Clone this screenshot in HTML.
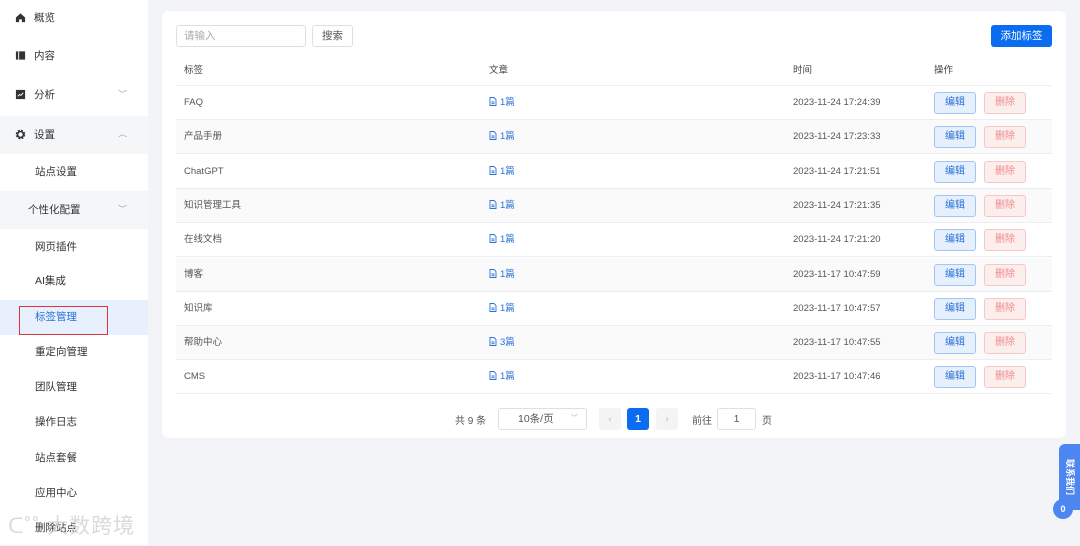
<!DOCTYPE html>
<html><head><meta charset="utf-8"><style>
*{box-sizing:border-box;margin:0;padding:0}
body{width:1080px;height:545px;overflow:hidden;background:#f3f4f7;font-family:"Liberation Sans","Noto Sans CJK SC",sans-serif;font-size:10px;color:#333;position:relative}
.sb{position:absolute;left:0;top:0;width:148px;height:545px;background:#fff}
.mi{position:absolute;left:0;width:148px;height:36px;line-height:36px;font-size:10.5px;color:#333}
.mi .ic{position:absolute;left:15px;top:12px;width:11px;height:11px}
.chev{position:absolute;right:22px;top:0;font-size:7px;color:#888;transform:scaleX(1.3)}
.card{position:absolute;left:162px;top:11px;width:904px;height:427px;background:#fff;border-radius:7px}
.inp{position:absolute;border:1px solid #dcdfe6;border-radius:3px;background:#fff;color:#aaa;font-size:10.5px}
.btn{position:absolute;border-radius:3px;text-align:center;font-size:10.5px}
.row{position:absolute;left:176px;width:876px;height:34px;border-bottom:1px solid #ebeef5;line-height:34px}
.row span{position:absolute;font-size:9.5px;color:#555}
.e,.d{position:absolute;top:6px;width:42px;height:22px;border-radius:3px;display:flex;align-items:center;justify-content:center;font-size:10px}
.e{left:758px;border:1px solid #a3c5f5;background:#e6f0fd;color:#2a72d8}
.d{left:808px;border:1px solid #f7c7c7;background:#fdeeee;color:#f08a8a}
.art{color:#2a72d8!important}
</style></head><body>
<div class="sb">
<div class="mi" style="top:0"><svg class="ic" viewBox="0 0 12 12"><path d="M1 6L6 1.5 11 6V11H7.5V8H4.5V11H1Z" fill="#333"/></svg><span style="position:absolute;left:34px">概览</span></div>
<div class="mi" style="top:38px"><svg class="ic" viewBox="0 0 12 12"><rect x="1" y="1.5" width="2.5" height="9" fill="#333"/><rect x="4.5" y="1.5" width="6.5" height="9" fill="#333"/></svg><span style="position:absolute;left:34px">内容</span></div>
<div class="mi" style="top:77px"><svg class="ic" viewBox="0 0 12 12"><rect x="1" y="1" width="10" height="10" fill="#333"/><path d="M3 8L5 6 6.5 7 9 4" stroke="#fff" fill="none"/></svg><span style="position:absolute;left:34px">分析</span><span class="chev">﹀</span></div>
<div class="mi" style="top:116px;height:38px;line-height:38px;background:#f5f6f8"><svg class="ic" viewBox="0 0 12 12" style="top:13px"><circle cx="6" cy="6" r="4" fill="none" stroke="#333" stroke-width="2.4" stroke-dasharray="2 1.2"/><circle cx="6" cy="6" r="3.2" fill="none" stroke="#333" stroke-width="1.6"/></svg><span style="position:absolute;left:34px">设置</span><span class="chev">︿</span></div>
<div class="mi" style="top:154px"><span style="position:absolute;left:35px">站点设置</span></div>
<div class="mi" style="top:191px;height:38px;line-height:38px;background:#f5f6f8"><span style="position:absolute;left:28px">个性化配置</span><span class="chev">﹀</span></div>
<div class="mi" style="top:229px"><span style="position:absolute;left:35px">网页插件</span></div>
<div class="mi" style="top:263px"><span style="position:absolute;left:35px">AI集成</span></div>
<div class="mi" style="top:300px;background:#e8f0fd;height:35px;line-height:35px"><span style="position:absolute;left:35px;color:#2a72d8">标签管理</span><div style="position:absolute;left:19px;top:6px;width:89px;height:29px;border:1.5px solid #d9363e"></div></div>
<div class="mi" style="top:334px"><span style="position:absolute;left:35px">重定向管理</span></div>
<div class="mi" style="top:369px"><span style="position:absolute;left:35px">团队管理</span></div>
<div class="mi" style="top:404px"><span style="position:absolute;left:35px">操作日志</span></div>
<div class="mi" style="top:440px"><span style="position:absolute;left:35px">站点套餐</span></div>
<div class="mi" style="top:475px"><span style="position:absolute;left:35px">应用中心</span></div>
<div class="mi" style="top:510px"><span style="position:absolute;left:35px">删除站点</span></div>
<div style="position:absolute;left:8px;top:510px;font-size:21px;color:rgba(205,205,205,.75);letter-spacing:1px">ᑕ˚˚ 大数跨境</div>
</div>
<div class="card"></div>
<div class="inp" style="left:176px;top:25px;width:130px;height:22px;line-height:20px;padding-left:7px">请输入</div>
<div class="btn" style="left:312px;top:25px;width:41px;height:22px;line-height:20px;border:1px solid #dcdfe6;color:#555">搜索</div>
<div class="btn" style="left:991px;top:25px;width:61px;height:22px;line-height:22px;background:#0b6cf0;color:#fff">添加标签</div>
<div class="row" style="top:55px;height:31px;line-height:31px"><span style="left:8px;color:#444">标签</span><span style="left:313px;color:#444">文章</span><span style="left:617px;color:#444">时间</span><span style="left:758px;color:#444">操作</span></div>
<div id="rows"></div>
<script>
var d=[["FAQ","1","2023-11-24 17:24:39"],["产品手册","1","2023-11-24 17:23:33"],["ChatGPT","1","2023-11-24 17:21:51"],["知识管理工具","1","2023-11-24 17:21:35"],["在线文档","1","2023-11-24 17:21:20"],["博客","1","2023-11-17 10:47:59"],["知识库","1","2023-11-17 10:47:57"],["帮助中心","3","2023-11-17 10:47:55"],["CMS","1","2023-11-17 10:47:46"]];
var ic='<svg width="8" height="9" viewBox="0 0 8 9" style="vertical-align:-1px;margin-right:3px"><path d="M1 .5H5L7 2.5V8.5H1Z M2.5 5H5.5 M2.5 6.7H5.5" fill="none" stroke="#2a72d8" stroke-width=".9"/></svg>';
var h="";d.forEach(function(r,i){var t=86+i*34.3;h+='<div class="row" style="top:'+t+'px;background:'+(i%2?'#fafafa':'#fff')+'"><span style="left:8px">'+r[0]+'</span><span class="art" style="left:313px">'+ic+r[1]+'篇</span><span style="left:617px">'+r[2]+'</span><div class="e">编辑</div><div class="d">删除</div></div>'});document.getElementById("rows").innerHTML=h;
</script>
<div style="position:absolute;left:455px;top:412px;font-size:10px;color:#555">共 9 条</div>
<div class="inp" style="left:498px;top:408px;width:89px;height:22px;line-height:20px;color:#555;padding-left:19px">10条/页<span style="position:absolute;right:8px;top:0;font-size:7px;color:#aaa">﹀</span></div>
<div class="btn" style="left:599px;top:408px;width:22px;height:22px;line-height:22px;background:#f4f4f5;color:#bbb">‹</div>
<div class="btn" style="left:627px;top:408px;width:22px;height:22px;line-height:22px;background:#0b6cf0;color:#fff;font-weight:bold">1</div>
<div class="btn" style="left:656px;top:408px;width:22px;height:22px;line-height:22px;background:#f4f4f5;color:#bbb">›</div>
<div style="position:absolute;left:692px;top:412px;font-size:10px;color:#555">前往</div>
<div class="inp" style="left:717px;top:408px;width:39px;height:22px;line-height:20px;color:#555;text-align:center">1</div>
<div style="position:absolute;left:762px;top:412px;font-size:10px;color:#555">页</div>
<div style="position:absolute;left:1059px;top:444px;width:21px;height:66px;background:#4d86f0;border-radius:6px 0 0 6px"></div>
<div style="position:absolute;left:1037px;top:470px;width:66px;height:14px;line-height:14px;transform:rotate(90deg);color:#fff;font-size:9px;text-align:center;font-weight:bold">联系我们</div>
<div style="position:absolute;left:1053px;top:499px;width:20px;height:20px;border-radius:50%;background:#4d86f0;color:#fff;font-size:9px;text-align:center;line-height:20px;font-weight:bold">0</div>
</body></html>
